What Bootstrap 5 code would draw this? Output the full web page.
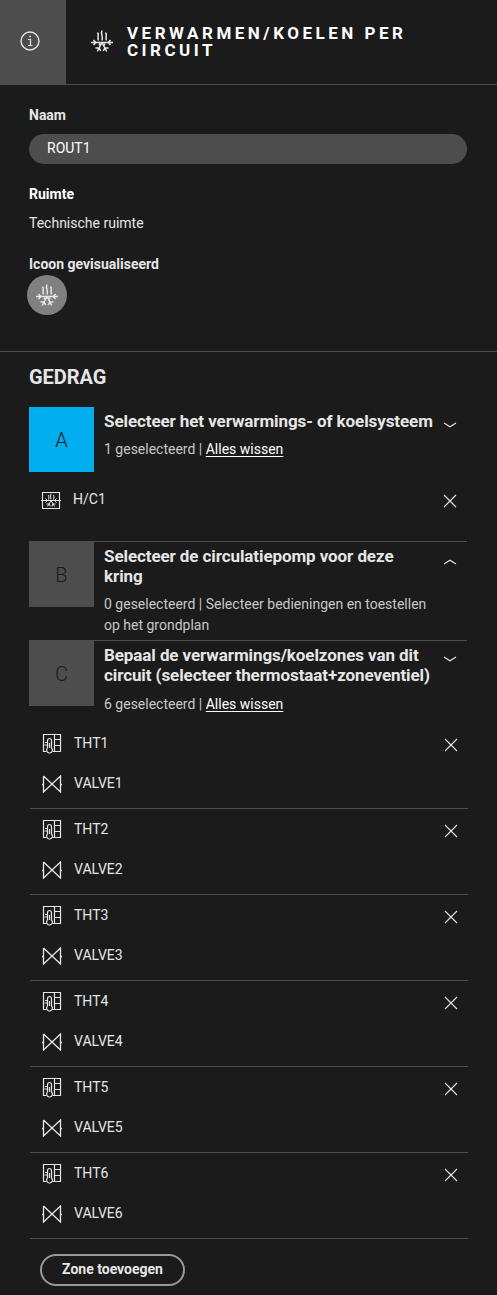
<!DOCTYPE html>
<html lang="nl">
<head>
<meta charset="utf-8">
<meta name="viewport" content="width=device-width, initial-scale=1">
<title>Verwarmen/koelen per circuit</title>
<link href="https://cdn.jsdelivr.net/npm/bootstrap@5.3.0/dist/css/bootstrap.min.css" rel="stylesheet">
<style>
body{background:#1b1b1b;color:#e6e6e6;font-family:Roboto,"Liberation Sans",sans-serif;font-size:14px;line-height:20px;height:1295px;overflow:hidden}
svg{fill:none;stroke:#e6e6e6;stroke-width:1;display:block;flex:none}
.top-bar{height:85px;border-bottom:1px solid #4d4d4d}
.info-tile{width:66px;height:84px;background:#4d4d4d;padding:0 6px 2px 0}
.top-bar h1{font-size:17px;line-height:17px;font-weight:700;letter-spacing:3.5px;color:#fff;margin:0 0 0 13px;padding-top:25px;white-space:nowrap}
.details{height:267px;border-bottom:1px solid #4d4d4d;padding:20px 30px 0 29px}
.field-label{font-weight:700;height:20px}
.name-input{height:30px;border-radius:15px;background:#4d4d4d;color:#fff;border:0;padding:0 18px 2px;font-size:14px;margin-top:9px}
.round-icon{width:40px;height:40px;background:#808080;margin:1px 0 0 -2px}
.behavior{padding:0 30px 0 29px}
.behavior h2{font-size:20px;line-height:24px;font-weight:700;margin:0;padding-top:13px;letter-spacing:-.05px}
.step{display:flex}
.step-letter{width:65px;height:65px;background:#4d4d4d;color:#1b1b1b;font-size:20px;font-weight:300;flex:none}
.step h3{font-size:17px;line-height:20px;font-weight:700;margin:0;letter-spacing:-.09px}
.step-body{margin-left:10px;padding-top:4px;width:334px;white-space:nowrap}
.step-body p{margin:0;color:#c8c8c8;line-height:21px}
.step-body a{color:#fff;text-underline-offset:2px}
.rule-top{border-top:1px solid #4d4d4d}
.item-name{margin-left:12px}
.zones{margin:6px -1px 0 1px}
.zone{height:86px;border-bottom:1px solid #4d4d4d;padding-left:12px}
.zone-row{height:40px}
.btn-zone{width:145px;height:32px;border:2px solid #999;border-radius:16px;color:#e6e6e6;font-size:14px;font-weight:700;line-height:20px;padding:3px 0 5px;margin:15px 0 0 11px}
</style>
</head>
<body>
<svg width="0" height="0" class="position-absolute">
  <symbol id="climate" viewBox="0 0 24 24">
    <path d="M1 13.500H23M3.500 11 5.800 13.500 3.500 16M20.500 11 18.200 13.500 20.500 16M12 13.500 7.300 22.500M12 13.500 16.700 22.500M5.500 19H9.200L10.700 22M18.500 19H14.800L13.300 22M9.500 14.500V16.500M14.500 14.500V16.500" stroke-width="1.500"/>
    <path d="M7.500 3.500C9.500 6 7 8 8.500 11.500M12 1.500C10.200 5 13.500 7 12 11.500M15.500 3.500C17.500 6 15 8 16.500 11.500" stroke-width="1.500"/>
  </symbol>
  <symbol id="system" viewBox="0 0 20 19">
    <path d="M1.500 1.500H18.500V17.500H1.500ZM0 9.500H20" stroke-width="1.100"/>
    <path d="M7.500 4Q8.500 6 7.500 8.500M10 2.500Q9 5 10 8.500M12.500 4Q13.500 6 12.500 8.500M10 9.500 6.500 15.500M10 9.500 13.500 15.500M5.500 13H8.500L9 15.500M14.500 13H11.500L11 15.500M4.500 7.500 6.500 9.500 4.500 11.500M15.500 7.500 13.500 9.500 15.500 11.500"/>
  </symbol>
  <symbol id="thermostat" viewBox="0 0 20 21">
    <path d="M4.500 18.500H1.500V1.500H18.500V18.500H10.500M12.500 1.500V18.500M12.500 6.500H18.500M12.500 12.500H18.500" stroke-width="1.200"/>
    <path d="M5.500 15V8Q5.500 5.500 7.500 5.500T9.500 8V15A2.900 2.900 0 1 1 5.500 15M3 9.500H5.500M2.500 12H5.500M7.500 10V15" stroke-width="1.200"/>
  </symbol>
  <symbol id="valve" viewBox="0 0 20 18">
    <path d="M1.500 1V17L18.500 1V17L1.500 1M0 9.500H1.500M18.500 9.500H20" stroke-width="1.300"/>
  </symbol>
  <symbol id="remove" viewBox="0 0 14 14"><path d="M1 1 13 13M13 1 1 13" stroke-width="1.100"/></symbol>
  <symbol id="chevron" viewBox="0 0 14 6"><path d="M1 1 7 4.800 13 1" stroke-width="1.100"/></symbol>
</svg>

<header class="top-bar d-flex">
  <div class="info-tile d-flex align-items-center justify-content-center">
    <svg width="20" height="20" viewBox="0 0 20 20"><circle cx="10" cy="10" r="9" stroke-width="1.400"/><path d="M8 8.500H10.500V14M8 14.500H12.500" stroke-width="1.200"/><path d="M9.300 5.500H11" stroke-width="1.600"/></svg>
  </div>
  <svg width="24" height="24" style="margin:29px 0 0 24px"><use href="#climate"/></svg>
  <h1>VERWARMEN/KOELEN PER<br>CIRCUIT</h1>
</header>

<section class="details">
  <div class="field-label">Naam</div>
  <input class="name-input d-block w-100" value="ROUT1" aria-label="Naam">
  <div class="field-label text-white" style="margin-top:20px">Ruimte</div>
  <div style="margin-top:9px">Technische ruimte</div>
  <div class="field-label" style="margin-top:21px">Icoon gevisualiseerd</div>
  <div class="round-icon rounded-circle d-flex align-items-center justify-content-center">
    <svg width="24" height="24"><use href="#climate"/></svg>
  </div>
</section>

<main class="behavior">
  <h2>GEDRAG</h2>
  <section class="step" style="margin-top:18px">
    <div class="step-letter d-flex align-items-center justify-content-center" style="background:#00adef">A</div>
    <div class="step-body"><h3>Selecteer het verwarmings- of koelsysteem</h3><p class="mt-2">1 geselecteerd | <a href="#">Alles wissen</a></p></div>
    <svg width="14" height="6" style="margin:15px 0 0 5px"><use href="#chevron"/></svg>
  </section>
  <div class="d-flex" style="height:69px;padding:17px 0 0 12px">
    <svg width="20" height="19" style="margin-top:2px"><use href="#system"/></svg>
    <span class="item-name">H/C1</span>
    <svg class="ms-auto" width="14" height="14" style="margin:5px 10px 0 0"><use href="#remove"/></svg>
  </div>
  <section class="step rule-top" style="height:99px">
    <div class="step-letter d-flex align-items-center justify-content-center">B</div>
    <div class="step-body"><h3>Selecteer de circulatiepomp voor deze<br>kring</h3><p class="mt-2">0 geselecteerd | Selecteer bedieningen en toestellen<br>op het grondplan</p></div>
    <svg width="14" height="6" style="margin:17px 0 0 5px;transform:scaleY(-1)"><use href="#chevron"/></svg>
  </section>
  <section class="step rule-top" style="height:77px">
    <div class="step-letter d-flex align-items-center justify-content-center">C</div>
    <div class="step-body"><h3>Bepaal de verwarmings/koelzones van dit<br>circuit (selecteer thermostaat+zoneventiel)</h3><p style="margin-top:9px">6 geselecteerd | <a href="#">Alles wissen</a></p></div>
    <svg width="14" height="6" style="margin:15px 0 0 5px"><use href="#chevron"/></svg>
  </section>
  <div class="zones" id="zones"></div>
  <button class="btn btn-zone" type="button">Zone toevoegen</button>
</main>

<script src="https://cdn.jsdelivr.net/npm/bootstrap@5.3.0/dist/js/bootstrap.bundle.min.js"></script>
<script>
document.getElementById('zones').innerHTML = [1,2,3,4,5,6].map(n => `
  <div class="zone">
    <div class="zone-row d-flex align-items-center">
      <svg width="20" height="21"><use href="#thermostat"/></svg>
      <span class="item-name">THT${n}</span>
      <svg class="ms-auto" width="14" height="14" style="margin:4px 10px 0 0"><use href="#remove"/></svg>
    </div>
    <div class="zone-row d-flex align-items-center">
      <svg width="20" height="18" style="margin-top:2px"><use href="#valve"/></svg>
      <span class="item-name">VALVE${n}</span>
    </div>
  </div>`).join('');
</script>
</body>
</html>
